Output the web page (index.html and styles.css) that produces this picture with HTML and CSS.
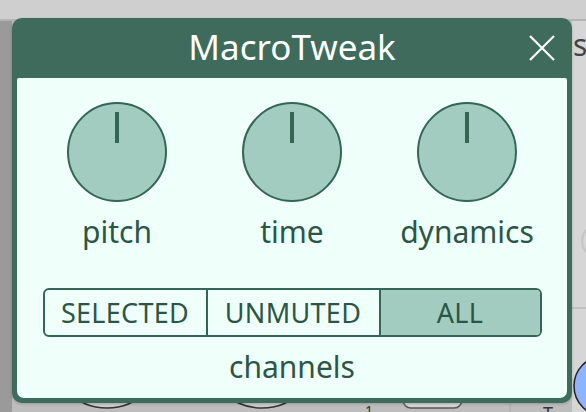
FILE: index.html
```html
<!DOCTYPE html>
<html>
<head>
    <meta charset="UTF-8">
    <meta name="viewport" content="width=device-width, initial-scale=1.0">
    <title>MacroTweak</title>
    <link rel="stylesheet" href="styles.css">
</head>
<body>
<div class="app">
    <svg class="backdrop" width="586" height="412" viewBox="0 0 586 412">
        <rect x="0" y="0" width="586" height="412" fill="#bdbdbd"/>
        <rect x="0" y="0" width="586" height="19" fill="#cfcfcf"/>
        <rect x="0" y="19" width="586" height="2" fill="#b4b4b4"/>
        <rect x="0" y="21" width="12" height="391" fill="#9a9a9a"/>
        <rect x="572" y="21" width="14" height="391" fill="#d6d6d6"/>
        <line x1="572" y1="308" x2="586" y2="308" stroke="#c2c2c2" stroke-width="2"/>
        <text x="573" y="56" font-family="Noto Sans, sans-serif" font-size="30" fill="#444">se</text>
        <circle cx="598" cy="241" r="16" fill="none" stroke="#c4c4c4" stroke-width="2"/>
        <circle cx="107" cy="352" r="56" fill="#cdcdcd" stroke="#333" stroke-width="1.5"/>
        <circle cx="107" cy="352" r="48" fill="#d8d8d8" stroke="#555" stroke-width="1"/>
        <circle cx="262" cy="352" r="56" fill="#cdcdcd" stroke="#333" stroke-width="1.5"/>
        <circle cx="262" cy="352" r="48" fill="#d8d8d8" stroke="#555" stroke-width="1"/>
        <text x="365" y="416" font-family="Noto Sans, sans-serif" font-size="14" fill="#333">1</text>
        <rect x="403" y="378" width="59" height="30" rx="8" fill="#d6d6d6" stroke="#555" stroke-width="1.5"/>
        <line x1="510" y1="402" x2="510" y2="412" stroke="#aaa" stroke-width="1"/>
        <text x="543" y="420" font-family="Noto Sans, sans-serif" font-size="18" fill="#333">T</text>
        <circle cx="604" cy="386" r="30" fill="#8fb4ff" stroke="#222" stroke-width="1.5"/>
    </svg>

    <div class="dialog">
        <div class="dialog-header">
            <span></span>
            <span class="dialog-title">MacroTweak</span>
            <button class="close-btn" type="button">
                <svg width="26" height="26" viewBox="0 0 26 26">
                    <path d="M1 1 L25 25 M25 1 L1 25" stroke="#fff" stroke-width="2.2" fill="none"/>
                </svg>
            </button>
        </div>
        <div class="dialog-body">
            <div class="knobs">
                <div class="knob-cell">
                    <div class="knob"><span class="knob-mark"></span></div>
                    <div class="knob-label">pitch</div>
                </div>
                <div class="knob-cell">
                    <div class="knob"><span class="knob-mark"></span></div>
                    <div class="knob-label">time</div>
                </div>
                <div class="knob-cell">
                    <div class="knob"><span class="knob-mark"></span></div>
                    <div class="knob-label">dynamics</div>
                </div>
            </div>
            <div class="segmented">
                <div class="segment">SELECTED</div>
                <div class="segment">UNMUTED</div>
                <div class="segment active">ALL</div>
            </div>
            <div class="seg-caption">channels</div>
        </div>
    </div>
</div>
</body>
</html>
```

FILE: styles.css
```css
body {
    margin: 0;
    font-family: "Noto Sans", "Open Sans", sans-serif;
    background-color: #bdbdbd;
}
.app {
    position: relative;
    width: 586px;
    height: 412px;
    overflow: hidden;
}
.backdrop {
    display: block;
}
.dialog {
    position: absolute;
    top: 18px;
    left: 12px;
    width: 560px;
    background-color: #3e6b5c;
    border-radius: 10px;
    box-shadow: 0 1px 3px rgba(0, 0, 0, 0.2);
}
.dialog-header {
    height: 60px;
    display: grid;
    grid-template-columns: 1fr auto 1fr;
    align-items: center;
}
.dialog-title {
    color: #fff;
    font-size: 35px;
    padding-bottom: 3px;
}
.close-btn {
    justify-self: end;
    margin-right: 17px;
    padding: 0;
    border: none;
    background: none;
    width: 26px;
    height: 26px;
    cursor: pointer;
}
.close-btn svg {
    display: block;
}
.dialog-body {
    margin: 0 5px 5px;
    background-color: #effffa;
    border-radius: 2px 2px 7px 7px;
    padding: 24px 0 11px;
    color: #2b5647;
}
.knobs {
    display: grid;
    grid-template-columns: repeat(3, 175px);
    justify-content: center;
}
.knob-cell {
    display: flex;
    flex-direction: column;
    align-items: center;
}
.knob {
    width: 100px;
    height: 100px;
    box-sizing: border-box;
    border: 2px solid #336653;
    border-radius: 50%;
    background-color: #a2ccbf;
    display: flex;
    justify-content: center;
    padding-top: 8px;
}
.knob-mark {
    display: block;
    width: 4px;
    height: 31px;
    background-color: #336653;
}
.knob-label {
    margin-top: 9px;
    font-size: 30px;
    line-height: 41px;
}
.segmented {
    margin: 36px auto 0;
    width: 499px;
    height: 49px;
    box-sizing: border-box;
    border: 2px solid #336653;
    border-radius: 6px;
    overflow: hidden;
    display: grid;
    grid-template-columns: 161px 173px 1fr;
}
.segment {
    display: flex;
    align-items: center;
    justify-content: center;
    font-size: 27px;
    letter-spacing: 0.3px;
}
.segment + .segment {
    border-left: 2px solid #336653;
}
.segment.active {
    background-color: #a2ccbf;
}
.seg-caption {
    margin-top: 9px;
    text-align: center;
    font-size: 30px;
    line-height: 41px;
}
```
